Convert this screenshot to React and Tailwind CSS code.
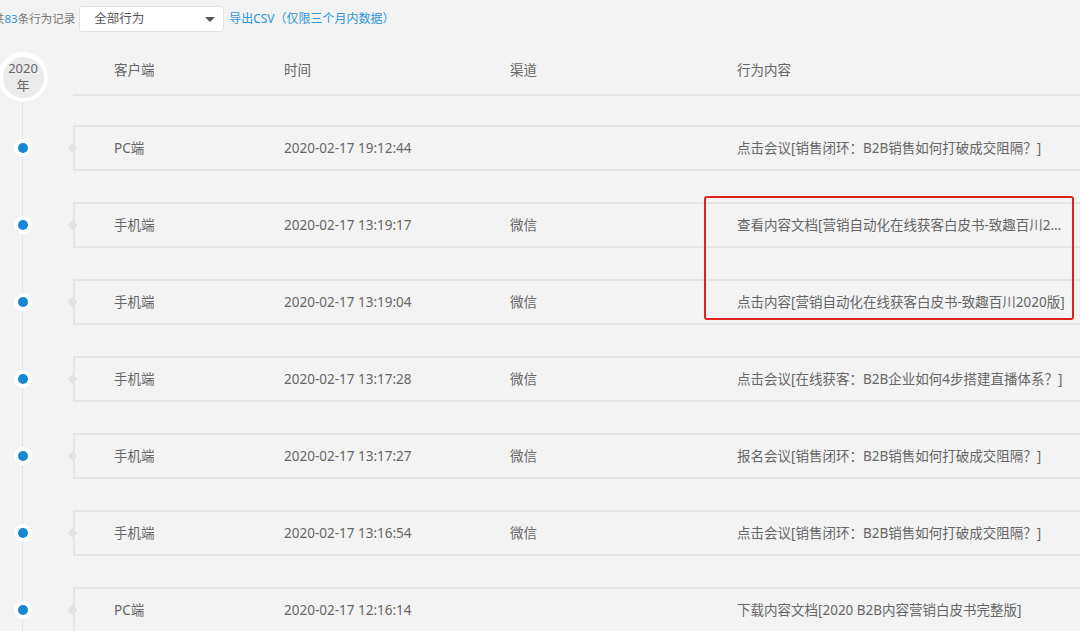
import { useState } from 'react';

const rows = [
  { client: 'PC端', time: '2020-02-17 19:12:44', channel: '', action: '点击会议[销售闭环：B2B销售如何打破成交阻隔？]' },
  { client: '手机端', time: '2020-02-17 13:19:17', channel: '微信', action: '查看内容文档[营销自动化在线获客白皮书-致趣百川2020版]' },
  { client: '手机端', time: '2020-02-17 13:19:04', channel: '微信', action: '点击内容[营销自动化在线获客白皮书-致趣百川2020版]' },
  { client: '手机端', time: '2020-02-17 13:17:28', channel: '微信', action: '点击会议[在线获客：B2B企业如何4步搭建直播体系？]' },
  { client: '手机端', time: '2020-02-17 13:17:27', channel: '微信', action: '报名会议[销售闭环：B2B销售如何打破成交阻隔？]' },
  { client: '手机端', time: '2020-02-17 13:16:54', channel: '微信', action: '点击会议[销售闭环：B2B销售如何打破成交阻隔？]' },
  { client: 'PC端', time: '2020-02-17 12:16:14', channel: '', action: '下载内容文档[2020 B2B内容营销白皮书完整版]' },
];

function Columns({ item }) {
  return (
    <>
      <div className="w-[170px] shrink-0">{item.client}</div>
      <div className="w-[226px] shrink-0">{item.time}</div>
      <div className="w-[227px] shrink-0">{item.channel}</div>
      <div className="w-[330px] shrink-0 truncate">{item.action}</div>
    </>
  );
}

export default function App() {
  const [filter] = useState('全部行为');

  return (
    <div
      className="relative w-[1080px] h-[631px] overflow-hidden bg-[#f3f3f3] text-[13.5px] text-[#666]"
      style={{ fontFamily: '"Noto Sans", "Noto Sans CJK SC", sans-serif' }}
    >
      {/* top toolbar */}
      <div className="flex items-center pt-[6px] h-[32px] -ml-[7px] text-[12px]">
        <span className="text-[#777] text-[11.5px]">共<span className="text-[#2f95dc]">83</span>条行为记录</span>
        <div className="ml-[4px] w-[145px] h-[26px] bg-white border border-[#e2e2e2] rounded-[3px] flex items-center pl-[14px] pr-[8px] text-[12.5px] text-[#555]">
          <span className="flex-1">{filter}</span>
          <span className="w-0 h-0 border-l-[5px] border-r-[5px] border-t-[5px] border-l-transparent border-r-transparent border-t-[#555]"></span>
        </div>
        <span className="ml-[5px] text-[#2f95dc]">导出CSV（仅限三个月内数据）</span>
      </div>

      <div className="relative mt-[15px]">
        {/* timeline line */}
        <div className="absolute left-[22px] top-[20px] bottom-0 w-[1px] bg-[#e4e4e4]"></div>

        {/* header */}
        <div className="relative flex h-[49px]">
          <div className="w-[75px] shrink-0 flex justify-center pr-[29px] pt-[5px]">
            <div className="w-[50px] h-[50px] shrink-0 rounded-full bg-white flex items-center justify-center">
              <div className="w-[41px] h-[41px] rounded-full bg-[#ebebeb] flex flex-col items-center justify-center leading-[17px] text-[13px] text-[#666]">
                <span>2020</span>
                <span>年</span>
              </div>
            </div>
          </div>
          <div className="flex-1 flex items-center pl-[41px] border-b-2 border-[#e5e5e5] -ml-[2px]">
            <Columns item={{ client: '客户端', time: '时间', channel: '渠道', action: '行为内容' }} />
          </div>
        </div>

        {/* rows */}
        <div className="flex flex-col gap-[31px] pt-[29px]">
          {rows.map((item, i) => (
            <div key={i} className="relative flex h-[46px]">
              <div className="w-[75px] shrink-0 flex items-center pl-[14px]">
                <div className="w-[18px] h-[18px] rounded-full bg-white flex items-center justify-center">
                  <div className="w-[10px] h-[10px] rounded-full bg-[#1687d5]"></div>
                </div>
              </div>
              <div className="relative flex-1 flex items-center pl-[39px] border-2 border-r-0 border-[#e5e5e5] -ml-[2px]">
                <span className="absolute -left-[6px] top-1/2 -translate-y-1/2 w-[7px] h-[7px] rotate-45 bg-[#e3e3e3]"></span>
                <Columns item={item} />
              </div>
            </div>
          ))}
        </div>
      </div>

      {/* red annotation */}
      <div className="absolute left-[704px] top-[196px] w-[370px] h-[124px] border-2 border-[#e0231f] rounded-[3px]"></div>
    </div>
  );
}
